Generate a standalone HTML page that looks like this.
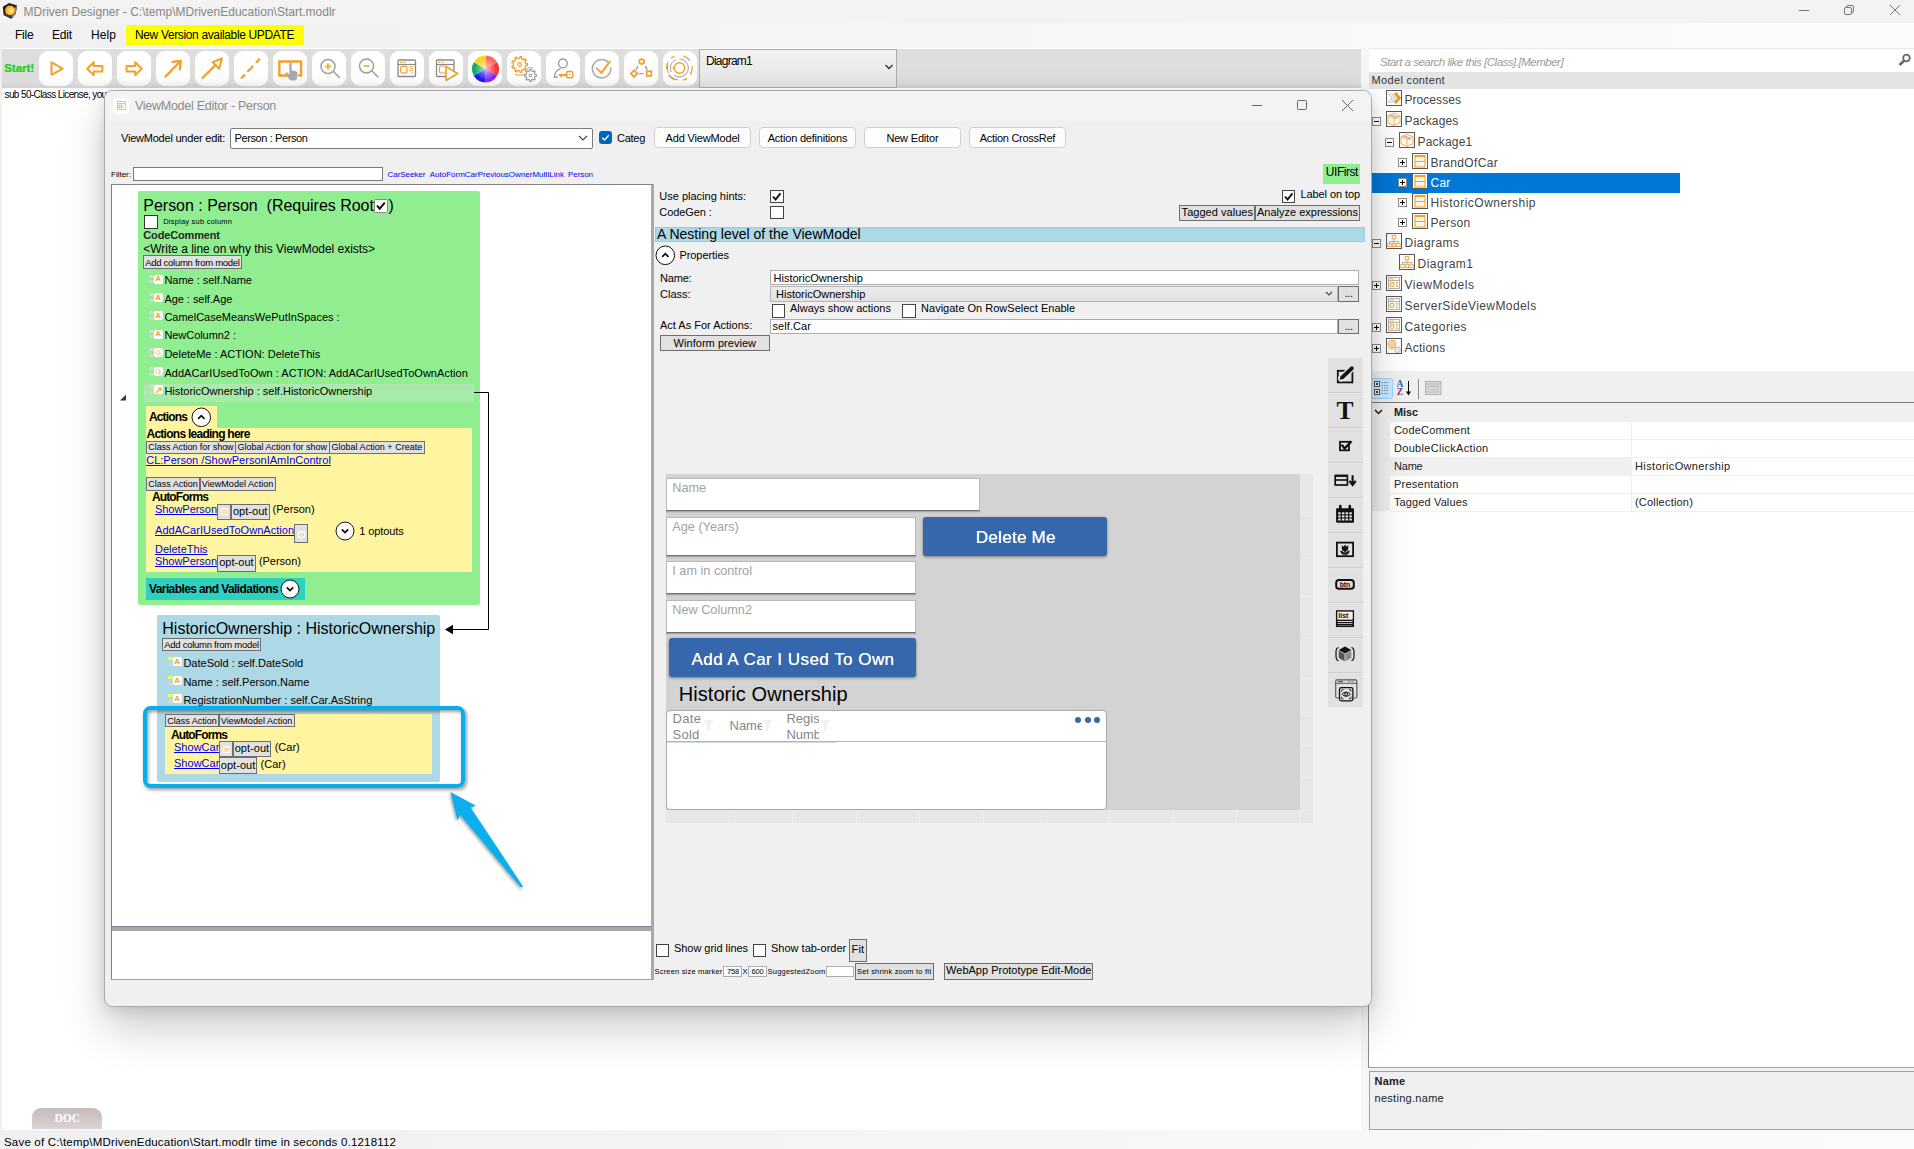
<!DOCTYPE html>
<html>
<head>
<meta charset="utf-8">
<title>MDriven Designer</title>
<style>
*{box-sizing:border-box;margin:0;padding:0}
html,body{width:1914px;height:1149px;overflow:hidden;background:#fff}
body{font-family:"Liberation Sans",sans-serif;font-size:11px;color:#000;position:relative}
.a{position:absolute}
.t{position:absolute;white-space:pre;line-height:1}
svg{position:absolute;overflow:visible}
</style>
</head>
<body>
<!-- main window chrome -->
<div class="a" style="left:0.0px;top:0.0px;width:1914.0px;height:23.0px;background:#f3f3f3;"></div>
<div class="a" style="left:0.0px;top:23.0px;width:1914.0px;height:25.0px;background:linear-gradient(to right,#f0f0f0,#fcfcfc);"></div>
<div class="a" style="left:0.0px;top:48.0px;width:2.0px;height:1101.0px;background:#f0f0f0;"></div>
<svg style="left:0.0px;top:0.0px" width="20" height="20"><defs><radialGradient id="sph" cx=".6" cy=".55" r=".7"><stop offset="0" stop-color="#fff3a0"/><stop offset=".45" stop-color="#ffc43a"/><stop offset="1" stop-color="#ff8a00"/></radialGradient></defs><path d="M9.100 3L17.100 5.500L15.700 13.800L11.400 18.800L3.600 15L2.800 6.700Z" fill="#1c1c1e"/><path d="M17.100 5.500L15.700 13.800L11.400 18.800L12.600 9.500Z" fill="#7d7d80"/><path d="M3.600 15L11.400 18.800L12 14.500L5 12.500Z" fill="#3a3a3c"/><circle cx="10" cy="10.300" r="4.900" fill="url(#sph)"/></svg>
<span class="t" style="left:23.5px;top:5.8px;font-size:12px;color:#868686;">MDriven Designer - C:\temp\MDrivenEducation\Start.modlr</span>
<span class="t" style="left:15.0px;top:28.6px;font-size:12px;letter-spacing:-0.21px;">File</span>
<span class="t" style="left:52.0px;top:28.6px;font-size:12px;letter-spacing:-0.17px;">Edit</span>
<span class="t" style="left:91.0px;top:28.6px;font-size:12px;letter-spacing:0.08px;">Help</span>
<div class="a" style="left:126.0px;top:25.0px;width:178.0px;height:20.0px;background:#ffff00;"></div>
<span class="t" style="left:135.0px;top:28.6px;font-size:12px;letter-spacing:-0.36px;">New Version available UPDATE</span>
<svg style="left:1799.0px;top:5.0px" width="10" height="10"><path d="M0 5.5H10" stroke="#777" stroke-width="1" fill="none"/></svg>
<svg style="left:1844.0px;top:5.0px" width="10" height="10"><rect x="0.5" y="2.5" width="7" height="7" rx="1.5" fill="none" stroke="#777"/><path d="M2.5 2.5V2a1.5 1.5 0 0 1 1.5-1.5h4a1.5 1.5 0 0 1 1.5 1.5v4a1.5 1.5 0 0 1-1.5 1.5h-.5" fill="none" stroke="#777"/></svg>
<svg style="left:1890.0px;top:5.0px" width="10" height="10"><path d="M0 0L10 10M10 0L0 10" stroke="#777" stroke-width="1" fill="none"/></svg>
<div class="a" style="left:2.0px;top:49.0px;width:1359.0px;height:39.0px;background:linear-gradient(#dedede,#dcdcdc 85%,#d2d2d2);"></div>
<div class="a" style="left:1361.0px;top:48.0px;width:8.0px;height:1082.0px;background:#f6f6f6;"></div>
<span class="t" style="left:4.0px;top:63.4px;font-size:11.5px;color:#2fd02f;font-weight:bold;text-shadow:0.4px 0 0 #2fd02f;">Start!</span>
<div class="a" style="left:39.0px;top:51.2px;width:34.0px;height:34.5px;background:linear-gradient(#fff 80%,#f4f4f4);border-radius:9px;"></div>
<svg style="left:39.0px;top:52.0px" width="34" height="34"><path d="M12.5 10.4V22.8L23.6 16.6Z" fill="none" stroke="#f5a028" stroke-width="2" stroke-linecap="round" stroke-linejoin="round" /></svg>
<div class="a" style="left:78.0px;top:51.2px;width:34.0px;height:34.5px;background:linear-gradient(#fff 80%,#f4f4f4);border-radius:9px;"></div>
<svg style="left:78.0px;top:52.0px" width="34" height="34"><path d="M9.2 16.7L15.8 10.3V14.1H24.4V19.4H15.8V23.1Z" fill="none" stroke="#f5a028" stroke-width="2" stroke-linecap="round" stroke-linejoin="round" /></svg>
<div class="a" style="left:117.0px;top:51.2px;width:34.0px;height:34.5px;background:linear-gradient(#fff 80%,#f4f4f4);border-radius:9px;"></div>
<svg style="left:117.0px;top:52.0px" width="34" height="34"><path d="M24.8 16.7L18.2 10.3V14.1H9.6V19.4H18.2V23.1Z" fill="none" stroke="#f5a028" stroke-width="2" stroke-linecap="round" stroke-linejoin="round" /></svg>
<div class="a" style="left:156.0px;top:51.2px;width:34.0px;height:34.5px;background:linear-gradient(#fff 80%,#f4f4f4);border-radius:9px;"></div>
<svg style="left:156.0px;top:52.0px" width="34" height="34"><path d="M9.5 24.5L24.8 8.8M16.3 9.8L24.8 8.8L23.8 17.3" fill="none" stroke="#f5a028" stroke-width="2.3" stroke-linecap="round" stroke-linejoin="round" /></svg>
<div class="a" style="left:195.0px;top:51.2px;width:34.0px;height:34.5px;background:linear-gradient(#fff 80%,#f4f4f4);border-radius:9px;"></div>
<svg style="left:195.0px;top:52.0px" width="34" height="34"><path d="M7.5 26L20.3 13.4" fill="none" stroke="#f5a028" stroke-width="2.3" stroke-linecap="round" stroke-linejoin="round" /><path d="M26.8 6.5L17.6 10.2L24.2 16.800Z" fill="none" stroke="#f5a028" stroke-width="2.1" stroke-linecap="round" stroke-linejoin="round" /></svg>
<div class="a" style="left:234.0px;top:51.2px;width:34.0px;height:34.5px;background:linear-gradient(#fff 80%,#f4f4f4);border-radius:9px;"></div>
<svg style="left:234.0px;top:52.0px" width="34" height="34"><path d="M7.800 25.800L25.400 7.300" fill="none" stroke="#f5a028" stroke-width="2.3" stroke-linecap="round" stroke-linejoin="round" stroke-dasharray="3.4 5.6 6.6 6 3.9"/></svg>
<div class="a" style="left:273.0px;top:51.2px;width:34.0px;height:34.5px;background:linear-gradient(#fff 80%,#f4f4f4);border-radius:9px;"></div>
<svg style="left:273.0px;top:52.0px" width="34" height="34"><path d="M19 23.500H6.300V9.500H28.100V23.500H26" fill="none" stroke="#f5a028" stroke-width="2.4" stroke-linecap="round" stroke-linejoin="round" stroke-linecap="butt"/><path transform="translate(-2.600 -2.400) scale(1.150)" d="M16.5 12.5c0-1.6 2-1.6 2 0v5.5l3.5.8c1.3.3 1.7 1 1.6 2.2l-.5 4.2c-.1.9-.7 1.6-1.7 1.6h-3.2c-1 0-1.5-.5-2-1.200l-2.800-4.500c-.6-1 .5-1.800 1.300-1l1.800 1.800z" fill="#aaa"/></svg>
<div class="a" style="left:312.0px;top:51.2px;width:34.0px;height:34.5px;background:linear-gradient(#fff 80%,#f4f4f4);border-radius:9px;"></div>
<svg style="left:312.0px;top:52.0px" width="34" height="34"><path d="M21.5 19.5L27.5 25.5" fill="none" stroke="#9e9e9e" stroke-width="1.5" stroke-linecap="round" stroke-linejoin="round" /><circle cx="16" cy="14.500" r="7" fill="none" stroke="#9e9e9e" stroke-width="1.5"/><path d="M13.5 14.500H18.500M16 12V17" fill="none" stroke="#f5a028" stroke-width="1.6" stroke-linecap="round" stroke-linejoin="round" /></svg>
<div class="a" style="left:351.0px;top:51.2px;width:34.0px;height:34.5px;background:linear-gradient(#fff 80%,#f4f4f4);border-radius:9px;"></div>
<svg style="left:351.0px;top:52.0px" width="34" height="34"><path d="M21 19L27 25" fill="none" stroke="#9e9e9e" stroke-width="1.5" stroke-linecap="round" stroke-linejoin="round" /><circle cx="15.500" cy="14" r="7" fill="none" stroke="#9e9e9e" stroke-width="1.5"/><path d="M13 14H18" fill="none" stroke="#f5a028" stroke-width="1.6" stroke-linecap="round" stroke-linejoin="round" /></svg>
<div class="a" style="left:390.0px;top:51.2px;width:34.0px;height:34.5px;background:linear-gradient(#fff 80%,#f4f4f4);border-radius:9px;"></div>
<svg style="left:390.0px;top:52.0px" width="34" height="34"><rect x="8" y="8" width="17.5" height="16.5" rx="1" fill="none" stroke="#8a8a8a" stroke-width="1.3"/><path d="M8 12.5H25.5" stroke="#8a8a8a" stroke-width="1.2"/><path d="M10 10.3H16" stroke="#f5a028" stroke-width="1.2" stroke-dasharray="1.5 1"/><rect x="10.700" y="14.300" width="6.300" height="6.800" rx="1.5" fill="none" stroke="#f5a028" stroke-width="1.2"/><path d="M19.500 14.500H23M19.500 16.500H23M19.500 18.500H23M21 21H23" stroke="#f5a028" stroke-width="1" opacity=".8"/></svg>
<div class="a" style="left:429.0px;top:51.2px;width:34.0px;height:34.5px;background:linear-gradient(#fff 80%,#f4f4f4);border-radius:9px;"></div>
<svg style="left:429.0px;top:52.0px" width="34" height="34"><rect x="7.5" y="8" width="17.5" height="16.5" rx="1" fill="none" stroke="#8a8a8a" stroke-width="1.3"/><path d="M7.5 12.5H25.0" stroke="#8a8a8a" stroke-width="1.2"/><path d="M9.5 10.3H15.5" stroke="#f5a028" stroke-width="1.2" stroke-dasharray="1.5 1"/><rect x="10.500" y="14" width="7" height="7" rx="1.5" fill="none" stroke="#f5a028" stroke-width="1.2"/><path d="M17 14.500V28.500L28.500 21.500Z" fill="#fff" stroke="#f5a028" stroke-width="1.6" stroke-linecap="round" stroke-linejoin="round" /></svg>
<div class="a" style="left:468.0px;top:51.2px;width:34.0px;height:34.5px;background:linear-gradient(#fff 80%,#f4f4f4);border-radius:9px;"></div>
<svg style="left:468.0px;top:52.0px" width="34" height="34"><path d="M17.5 17L17.50 3.50A13.5 13.5 0 0 1 29.19 10.25Z" fill="#ff6b60"/><path d="M17.5 17L29.19 10.25A13.5 13.5 0 0 1 29.19 23.75Z" fill="#ff3535"/><path d="M17.5 17L29.19 23.75A13.5 13.5 0 0 1 17.50 30.50Z" fill="#8a2cf0"/><path d="M17.5 17L17.50 30.50A13.5 13.5 0 0 1 5.81 23.75Z" fill="#1c1cf5"/><path d="M17.5 17L5.81 23.75A13.5 13.5 0 0 1 5.81 10.25Z" fill="#12ad6c"/><path d="M17.5 17L5.81 10.25A13.5 13.5 0 0 1 17.50 3.50Z" fill="#ffd21e"/><circle cx="17.5" cy="17" r="9.5" fill="#fff" opacity="0.18"/><circle cx="17.5" cy="17" r="6.5" fill="#fff" opacity="0.2"/><circle cx="17.5" cy="17" r="3.5" fill="#fff" opacity="0.25"/></svg>
<div class="a" style="left:507.0px;top:51.2px;width:34.0px;height:34.5px;background:linear-gradient(#fff 80%,#f4f4f4);border-radius:9px;"></div>
<svg style="left:507.0px;top:52.0px" width="34" height="34"><path d="M20.54 11.54 L20.54 13.46 L18.72 13.47 L17.91 15.69 L19.30 16.87 L18.07 18.34 L16.67 17.18 L14.62 18.36 L14.92 20.16 L13.04 20.49 L12.71 18.70 L10.38 18.29 L9.46 19.86 L7.80 18.90 L8.70 17.32 L7.18 15.51 L5.46 16.12 L4.81 14.32 L6.51 13.68 L6.51 11.32 L4.81 10.68 L5.46 8.88 L7.18 9.49 L8.70 7.68 L7.80 6.10 L9.46 5.14 L10.38 6.71 L12.71 6.30 L13.04 4.51 L14.92 4.84 L14.62 6.64 L16.67 7.82 L18.07 6.66 L19.30 8.13 L17.91 9.31 L18.72 11.53Z" fill="none" stroke="#f5a028" stroke-width="1.3" stroke-linejoin="round"/><circle cx="12.600" cy="12.500" r="1.800" fill="none" stroke="#f5a028" stroke-width="1.2"/><path d="M8.500 22.500C11 23.600 14 23.600 16.500 22.500" fill="none" stroke="#f5a028" stroke-width="1" stroke-linecap="round" stroke-linejoin="round" /><path d="M29.46 22.68 L29.46 24.12 L28.01 24.32 L27.34 25.94 L28.22 27.10 L27.20 28.12 L26.04 27.24 L24.42 27.91 L24.22 29.36 L22.78 29.36 L22.58 27.91 L20.96 27.24 L19.80 28.12 L18.78 27.10 L19.66 25.94 L18.99 24.32 L17.54 24.12 L17.54 22.68 L18.99 22.48 L19.66 20.86 L18.78 19.70 L19.80 18.68 L20.96 19.56 L22.58 18.89 L22.78 17.44 L24.22 17.44 L24.42 18.89 L26.04 19.56 L27.20 18.68 L28.22 19.70 L27.34 20.86 L28.01 22.48Z" fill="none" stroke="#9e9e9e" stroke-width="1.2" stroke-linejoin="round"/><circle cx="23.500" cy="23.400" r="1.400" fill="none" stroke="#9e9e9e" stroke-width="1.1"/><path d="M20.500 16.300C22.500 15.300 24.500 15.300 26.500 16.300" fill="none" stroke="#9e9e9e" stroke-width="1" stroke-linecap="round" stroke-linejoin="round" stroke-dasharray="2 1.2"/></svg>
<div class="a" style="left:546.0px;top:51.2px;width:34.0px;height:34.5px;background:linear-gradient(#fff 80%,#f4f4f4);border-radius:9px;"></div>
<svg style="left:546.0px;top:52.0px" width="34" height="34"><circle cx="16.900" cy="11.400" r="4.400" fill="none" stroke="#9e9e9e" stroke-width="1.4"/><path d="M14.200 16.600C10.500 18 8.600 21.500 8.300 25.300H11.200" fill="none" stroke="#9e9e9e" stroke-width="1.4" stroke-linecap="round" stroke-linejoin="round" /><path d="M13.500 23H20.500" fill="none" stroke="#f5a028" stroke-width="2.2" stroke-linecap="round" stroke-linejoin="round" /><rect x="20.500" y="19.600" width="6.200" height="6.200" rx="1.600" fill="none" stroke="#f5a028" stroke-width="1.5"/><circle cx="23.700" cy="22.600" r=".8" fill="#f5a028"/><path d="M15.200 23V25" fill="none" stroke="#f5a028" stroke-width="1.5" stroke-linecap="round" stroke-linejoin="round" /></svg>
<div class="a" style="left:585.0px;top:51.2px;width:34.0px;height:34.5px;background:linear-gradient(#fff 80%,#f4f4f4);border-radius:9px;"></div>
<svg style="left:585.0px;top:52.0px" width="34" height="34"><path d="M22.500 9.650A9.200 9.200 0 1 0 25.760 15.900" fill="none" stroke="#a8a8a8" stroke-width="1.5" stroke-linecap="round"/><path d="M11.700 16.400L16.400 20.900L24.800 9.600" fill="none" stroke="#f5a028" stroke-width="2" stroke-linecap="round" stroke-linejoin="round" /></svg>
<div class="a" style="left:624.0px;top:51.2px;width:34.0px;height:34.5px;background:linear-gradient(#fff 80%,#f4f4f4);border-radius:9px;"></div>
<svg style="left:624.0px;top:52.0px" width="34" height="34"><circle cx="17.700" cy="9.600" r="2.400" fill="none" stroke="#f5a028" stroke-width="1.800"/><rect x="7.800" y="19.300" width="4.600" height="4.600" transform="rotate(45 10.100 21.600)" fill="none" stroke="#f5a028" stroke-width="1.800"/><rect x="22.700" y="19.300" width="4.600" height="4.600" fill="none" stroke="#f5a028" stroke-width="1.800"/><path d="M13.700 14.600L12.200 17.400M21.600 14.600L23.100 17.400M15.500 21.600H19" fill="none" stroke="#9e9e9e" stroke-width="1.4" stroke-linecap="round" stroke-linejoin="round" /></svg>
<div class="a" style="left:663.0px;top:51.2px;width:34.0px;height:34.5px;background:linear-gradient(#fff 80%,#f4f4f4);border-radius:9px;"></div>
<svg style="left:663.0px;top:52.0px" width="34" height="34"><circle cx="16.400" cy="16" r="5.300" fill="none" stroke="#f5a028" stroke-width="1.4"/><circle cx="16.400" cy="16" r="9" fill="none" stroke="#9e9e9e" stroke-width="1" stroke-dasharray="20 4 14 5"/><circle cx="16.400" cy="16" r="12.800" fill="none" stroke="#f5a028" stroke-width="1.300" stroke-dasharray="7 5 4 9 8 6"/><path d="M4.900 12.500A12.000 12.000 0 0 0 15.400 28" fill="none" stroke="#9e9e9e" stroke-width="1" stroke-dasharray="9 3"/><path d="M9.300 16H10.800" fill="none" stroke="#f5a028" stroke-width="1.2" stroke-linecap="round" stroke-linejoin="round" /></svg>
<div class="a" style="left:699.0px;top:49.0px;width:198.0px;height:38.5px;background:linear-gradient(#f2f2f2,#e4e4e4);border:1px solid #adadad;"></div>
<span class="t" style="left:706.0px;top:54.6px;font-size:12px;letter-spacing:-0.75px;">Diagram1</span>
<svg style="left:885.0px;top:64.0px" width="8" height="6"><path d="M0.5 1L4 4.5L7.5 1" fill="none" stroke="#333" stroke-width="1.4"/></svg>
<span class="t" style="left:4.5px;top:90.1px;font-size:10px;letter-spacing:-0.61px;">sub 50-Class License, you</span>
<!-- right panel -->
<div class="a" style="left:1369.0px;top:48.0px;width:545.0px;height:1082.0px;background:#fff;"></div>
<div class="a" style="left:1369.0px;top:47.5px;width:545.0px;height:1.0px;background:#e9e9e9;"></div>
<span class="t" style="left:1380.0px;top:57.2px;font-size:11.5px;color:#9b9b9b;font-style:italic;letter-spacing:-0.49px;">Start a search like this [Class].[Member]</span>
<svg style="left:1897.0px;top:53.0px" width="15" height="14"><circle cx="9.500" cy="5" r="3.300" fill="none" stroke="#666" stroke-width="1.800"/><path d="M7 7.800L2.500 12" stroke="#666" stroke-width="2.600" stroke-linecap="butt"/></svg>
<div class="a" style="left:1369.0px;top:72.0px;width:545.0px;height:16.5px;background:#e4e4e4;"></div>
<span class="t" style="left:1371.5px;top:74.8px;font-size:11px;color:#333;letter-spacing:0.34px;">Model content</span>
<div class="a" style="left:1371.0px;top:173.0px;width:309.0px;height:19.5px;background:#0078d7;"></div>
<svg style="left:1386.0px;top:90.0px" width="16" height="16"><rect x=".5" y=".5" width="15" height="15" fill="#fff" stroke="#5a5a5a"/><path d="M2.300 3.200L6.200 8L2.300 12.800M5.300 3.200L9.200 8L5.300 12.800" fill="none" stroke="#c4c4c4" stroke-width="1.100"/><path d="M9 3L13.200 8L9 13" fill="none" stroke="#f39a1e" stroke-width="3"/></svg>
<span class="t" style="left:1404.5px;top:94.0px;font-size:12px;color:#444;letter-spacing:0.05px;">Processes</span>
<svg style="left:1372.0px;top:116.5px" width="9" height="9"><rect x=".5" y=".5" width="8" height="8" fill="#fff" stroke="#8c8c8c"/><path d="M2 4.5H7" stroke="#000" stroke-width="1"/></svg>
<svg style="left:1386.0px;top:111.0px" width="16" height="16"><rect x=".5" y=".5" width="15" height="15" fill="#fff" stroke="#5a5a5a"/><path d="M2 4.800L8 2.200L14 4.800V11.800L8 14.400L2 11.800Z" fill="#fffaf2" stroke="#f7b558" stroke-width="1" stroke-linejoin="round"/><path d="M2 4.800L8 7.400L14 4.800M8 7.400V14.400" fill="none" stroke="#f7b558" stroke-width="1"/><path d="M4.500 3.800L10.500 6.300V8" fill="none" stroke="#b0b0b0" stroke-width="1.300"/></svg>
<span class="t" style="left:1404.5px;top:115.0px;font-size:12px;color:#444;letter-spacing:0.16px;">Packages</span>
<svg style="left:1385.0px;top:137.5px" width="9" height="9"><rect x=".5" y=".5" width="8" height="8" fill="#fff" stroke="#8c8c8c"/><path d="M2 4.5H7" stroke="#000" stroke-width="1"/></svg>
<svg style="left:1399.0px;top:132.0px" width="16" height="16"><rect x=".5" y=".5" width="15" height="15" fill="#fff" stroke="#5a5a5a"/><path d="M2 4.800L8 2.200L14 4.800V11.800L8 14.400L2 11.800Z" fill="#fffaf2" stroke="#f7b558" stroke-width="1" stroke-linejoin="round"/><path d="M2 4.800L8 7.400L14 4.800M8 7.400V14.400" fill="none" stroke="#f7b558" stroke-width="1"/><path d="M4.500 3.800L10.500 6.300V8" fill="none" stroke="#b0b0b0" stroke-width="1.300"/></svg>
<span class="t" style="left:1417.5px;top:136.0px;font-size:12px;color:#444;letter-spacing:0.20px;">Package1</span>
<svg style="left:1398.0px;top:157.5px" width="9" height="9"><rect x=".5" y=".5" width="8" height="8" fill="#fff" stroke="#8c8c8c"/><path d="M2 4.5H7" stroke="#000" stroke-width="1"/><path d="M4.5 2V7" stroke="#000" stroke-width="1"/></svg>
<svg style="left:1412.0px;top:153.0px" width="16" height="16"><rect x=".5" y=".5" width="15" height="15" fill="#fff" stroke="#5a5a5a"/><rect x="3" y="2.500" width="10" height="11.500" fill="#fff7ec" stroke="#f5a028" stroke-width="1.1"/><path d="M3 3H13" stroke="#f5a028" stroke-width="2"/><path d="M3 8.500H13" stroke="#f5a028" stroke-width="1.1"/></svg>
<span class="t" style="left:1430.5px;top:157.0px;font-size:12px;color:#444;letter-spacing:0.35px;">BrandOfCar</span>
<svg style="left:1398.0px;top:177.5px" width="9" height="9"><rect x=".5" y=".5" width="8" height="8" fill="#fff" stroke="#8c8c8c"/><path d="M2 4.5H7" stroke="#000" stroke-width="1"/><path d="M4.5 2V7" stroke="#000" stroke-width="1"/></svg>
<svg style="left:1412.0px;top:173.0px" width="16" height="16"><rect x=".5" y=".5" width="15" height="15" fill="#fff" stroke="#5a5a5a"/><rect x="3" y="2.500" width="10" height="11.500" fill="#fff7ec" stroke="#f5a028" stroke-width="1.1"/><path d="M3 3H13" stroke="#f5a028" stroke-width="2"/><path d="M3 8.500H13" stroke="#f5a028" stroke-width="1.1"/></svg>
<span class="t" style="left:1430.5px;top:177.0px;font-size:12px;color:#fff;letter-spacing:0.22px;">Car</span>
<svg style="left:1398.0px;top:197.5px" width="9" height="9"><rect x=".5" y=".5" width="8" height="8" fill="#fff" stroke="#8c8c8c"/><path d="M2 4.5H7" stroke="#000" stroke-width="1"/><path d="M4.5 2V7" stroke="#000" stroke-width="1"/></svg>
<svg style="left:1412.0px;top:193.0px" width="16" height="16"><rect x=".5" y=".5" width="15" height="15" fill="#fff" stroke="#5a5a5a"/><rect x="3" y="2.500" width="10" height="11.500" fill="#fff7ec" stroke="#f5a028" stroke-width="1.1"/><path d="M3 3H13" stroke="#f5a028" stroke-width="2"/><path d="M3 8.500H13" stroke="#f5a028" stroke-width="1.1"/></svg>
<span class="t" style="left:1430.5px;top:197.0px;font-size:12px;color:#444;letter-spacing:0.48px;">HistoricOwnership</span>
<svg style="left:1398.0px;top:217.5px" width="9" height="9"><rect x=".5" y=".5" width="8" height="8" fill="#fff" stroke="#8c8c8c"/><path d="M2 4.5H7" stroke="#000" stroke-width="1"/><path d="M4.5 2V7" stroke="#000" stroke-width="1"/></svg>
<svg style="left:1412.0px;top:213.0px" width="16" height="16"><rect x=".5" y=".5" width="15" height="15" fill="#fff" stroke="#5a5a5a"/><rect x="3" y="2.500" width="10" height="11.500" fill="#fff7ec" stroke="#f5a028" stroke-width="1.1"/><path d="M3 3H13" stroke="#f5a028" stroke-width="2"/><path d="M3 8.500H13" stroke="#f5a028" stroke-width="1.1"/></svg>
<span class="t" style="left:1430.5px;top:217.0px;font-size:12px;color:#444;letter-spacing:0.33px;">Person</span>
<svg style="left:1372.0px;top:238.5px" width="9" height="9"><rect x=".5" y=".5" width="8" height="8" fill="#fff" stroke="#8c8c8c"/><path d="M2 4.5H7" stroke="#000" stroke-width="1"/></svg>
<svg style="left:1386.0px;top:233.0px" width="16" height="16"><rect x=".5" y=".5" width="15" height="15" fill="#fff" stroke="#5a5a5a"/><rect x="6.200" y="2.500" width="3.600" height="3.300" fill="none" stroke="#f7a840" stroke-width=".9"/><path d="M8 6V8.500M3.500 10.500V8.500H12.500V10.500M8 8.500V10.500" fill="none" stroke="#b0b0b0" stroke-width="1"/><rect x="1.800" y="10.600" width="3.400" height="3" fill="none" stroke="#f7a840" stroke-width=".9"/><rect x="6.300" y="10.600" width="3.400" height="3" fill="none" stroke="#f7a840" stroke-width=".9"/><rect x="10.800" y="10.600" width="3.400" height="3" fill="none" stroke="#f7a840" stroke-width=".9"/></svg>
<span class="t" style="left:1404.5px;top:237.0px;font-size:12px;color:#444;letter-spacing:0.46px;">Diagrams</span>
<svg style="left:1399.0px;top:254.0px" width="16" height="16"><rect x=".5" y=".5" width="15" height="15" fill="#fff" stroke="#5a5a5a"/><rect x="6.200" y="2.500" width="3.600" height="3.300" fill="none" stroke="#f7a840" stroke-width=".9"/><path d="M8 6V8.500M3.500 10.500V8.500H12.500V10.500M8 8.500V10.500" fill="none" stroke="#b0b0b0" stroke-width="1"/><rect x="1.800" y="10.600" width="3.400" height="3" fill="none" stroke="#f7a840" stroke-width=".9"/><rect x="6.300" y="10.600" width="3.400" height="3" fill="none" stroke="#f7a840" stroke-width=".9"/><rect x="10.800" y="10.600" width="3.400" height="3" fill="none" stroke="#f7a840" stroke-width=".9"/></svg>
<span class="t" style="left:1417.5px;top:258.0px;font-size:12px;color:#444;letter-spacing:0.50px;">Diagram1</span>
<svg style="left:1372.0px;top:280.5px" width="9" height="9"><rect x=".5" y=".5" width="8" height="8" fill="#fff" stroke="#8c8c8c"/><path d="M2 4.5H7" stroke="#000" stroke-width="1"/><path d="M4.5 2V7" stroke="#000" stroke-width="1"/></svg>
<svg style="left:1386.0px;top:275.0px" width="16" height="16"><rect x=".5" y=".5" width="15" height="15" fill="#fff" stroke="#5a5a5a"/><rect x="2.500" y="2.500" width="11" height="11" fill="none" stroke="#b5b5b5" stroke-width="1"/><path d="M2.500 5.500H13.500" stroke="#b5b5b5"/><path d="M3.500 4H8" stroke="#f5a028" stroke-width="1" opacity=".7"/><rect x="4.200" y="7.500" width="3.600" height="3.800" rx=".8" fill="none" stroke="#f5a028" stroke-width="1"/><path d="M10 7.500H12M11 7.500V11.500M10 11.500H12" stroke="#f5a028" stroke-width=".9" opacity=".8" fill="none"/></svg>
<span class="t" style="left:1404.5px;top:279.0px;font-size:12px;color:#444;letter-spacing:0.55px;">ViewModels</span>
<svg style="left:1386.0px;top:296.0px" width="16" height="16"><rect x=".5" y=".5" width="15" height="15" fill="#fff" stroke="#5a5a5a"/><rect x="2.500" y="2.500" width="11" height="11" fill="none" stroke="#b5b5b5" stroke-width="1"/><path d="M2.500 5.500H13.500" stroke="#b5b5b5"/><path d="M3.500 4H8" stroke="#f5a028" stroke-width="1" opacity=".7"/><rect x="4.200" y="7.500" width="3.600" height="3.800" rx=".8" fill="none" stroke="#f5a028" stroke-width="1"/><path d="M10 7.500H12M11 7.500V11.500M10 11.500H12" stroke="#f5a028" stroke-width=".9" opacity=".8" fill="none"/></svg>
<span class="t" style="left:1404.5px;top:300.0px;font-size:12px;color:#444;letter-spacing:0.41px;">ServerSideViewModels</span>
<svg style="left:1372.0px;top:322.5px" width="9" height="9"><rect x=".5" y=".5" width="8" height="8" fill="#fff" stroke="#8c8c8c"/><path d="M2 4.5H7" stroke="#000" stroke-width="1"/><path d="M4.5 2V7" stroke="#000" stroke-width="1"/></svg>
<svg style="left:1386.0px;top:317.0px" width="16" height="16"><rect x=".5" y=".5" width="15" height="15" fill="#fff" stroke="#5a5a5a"/><rect x="2.500" y="2.500" width="11" height="11" fill="none" stroke="#b5b5b5" stroke-width="1"/><path d="M2.500 5.500H13.500" stroke="#b5b5b5"/><path d="M3.500 4H8" stroke="#f5a028" stroke-width="1" opacity=".7"/><rect x="4.200" y="7.500" width="3.600" height="3.800" rx=".8" fill="none" stroke="#f5a028" stroke-width="1"/><path d="M10 7.500H12M11 7.500V11.500M10 11.500H12" stroke="#f5a028" stroke-width=".9" opacity=".8" fill="none"/></svg>
<span class="t" style="left:1404.5px;top:321.0px;font-size:12px;color:#444;letter-spacing:0.45px;">Categories</span>
<svg style="left:1372.0px;top:343.5px" width="9" height="9"><rect x=".5" y=".5" width="8" height="8" fill="#fff" stroke="#8c8c8c"/><path d="M2 4.5H7" stroke="#000" stroke-width="1"/><path d="M4.5 2V7" stroke="#000" stroke-width="1"/></svg>
<svg style="left:1386.0px;top:338.0px" width="16" height="16"><rect x=".5" y=".5" width="15" height="15" fill="#fff" stroke="#5a5a5a"/><circle cx="6" cy="6" r="3.400" fill="none" stroke="#f7a840" stroke-width="1.300"/><circle cx="6" cy="6" r="1.100" fill="none" stroke="#f7a840" stroke-width=".9"/><path d="M3.500 10.500C5 11.300 7 11.300 8.500 10.500" fill="none" stroke="#f7a840" stroke-width=".8"/><circle cx="11.500" cy="11.800" r="2.700" fill="none" stroke="#c8c8c8" stroke-width="1.200"/><circle cx="11.500" cy="11.800" r=".8" fill="#c8c8c8"/></svg>
<span class="t" style="left:1404.5px;top:342.0px;font-size:12px;color:#444;letter-spacing:0.23px;">Actions</span>
<div class="a" style="left:1369.0px;top:371.0px;width:545.0px;height:31.0px;background:#f0f0f0;"></div>
<div class="a" style="left:1371.3px;top:378.0px;width:21.7px;height:20.5px;background:#cce8ff;border:1px solid #99d1ff;border-radius:2.5px;"></div>
<svg style="left:1374.0px;top:380.0px" width="16" height="16"><rect x=".5" y="1.500" width="5" height="5" fill="#fff" stroke="#555"/><path d="M1.800 4H4.200M3 2.800V5.200" stroke="#000" stroke-width="1"/><rect x=".5" y="9.500" width="5" height="5" fill="#fff" stroke="#555"/><path d="M1.800 12H4.200M3 10.800V13.200" stroke="#000" stroke-width="1"/><path d="M7.500 2.500H14M7.500 5.500H14M7.500 8H14M7.500 10.500H14M7.500 13.500H14" stroke="#6a8fb0" stroke-width="1" stroke-dasharray="1.500 1"/></svg>
<span class="t" style="left:1396.5px;top:380.3px;font-size:9.5px;color:#2a62c9;font-weight:bold;font-family:'Liberation Serif',serif;">A</span>
<span class="t" style="left:1396.8px;top:388.3px;font-size:9.5px;color:#8a3a6a;font-weight:bold;font-family:'Liberation Serif',serif;">Z</span>
<svg style="left:1405.0px;top:380.0px" width="8" height="16"><path d="M3.500 1V14" stroke="#000" stroke-width="1"/><path d="M1 11.500L3.500 15.500L6 11.500Z" fill="#000"/></svg>
<div class="a" style="left:1418.0px;top:379.0px;width:1.0px;height:20.0px;background:#8a8a8a;"></div>
<svg style="left:1425.0px;top:380.0px" width="17" height="16"><rect x=".5" y="1.500" width="15.500" height="13" fill="#dcdcdc" stroke="#b0b0b0"/><path d="M.5 4H16" stroke="#b0b0b0"/><rect x="3" y="6.500" width="10" height="5.500" fill="none" stroke="#b8b8b8"/><path d="M5 9.500H11" stroke="#bbb"/></svg>
<div class="a" style="left:1369.0px;top:402.0px;width:545.0px;height:1.0px;background:#7a7a7a;"></div>
<div class="a" style="left:1372.0px;top:403.0px;width:542.0px;height:18.5px;background:#f0f0f0;"></div>
<div class="a" style="left:1372.0px;top:421.0px;width:18.0px;height:90.0px;background:#f0f0f0;"></div>
<svg style="left:1373.5px;top:408.7px" width="9" height="6"><path d="M1 1L4.500 4.500L8 1" fill="none" stroke="#222" stroke-width="1.500"/></svg>
<span class="t" style="left:1394.0px;top:406.6px;font-size:11px;color:#222;font-weight:bold;letter-spacing:-0.12px;">Misc</span>
<div class="a" style="left:1390.0px;top:438.5px;width:524.0px;height:1.0px;background:#f0f0f0;"></div>
<span class="t" style="left:1394.0px;top:424.6px;font-size:11px;color:#222;letter-spacing:0.18px;">CodeComment</span>
<div class="a" style="left:1390.0px;top:456.5px;width:524.0px;height:1.0px;background:#f0f0f0;"></div>
<span class="t" style="left:1394.0px;top:442.6px;font-size:11px;color:#222;letter-spacing:0.31px;">DoubleClickAction</span>
<div class="a" style="left:1390.0px;top:457.0px;width:241.0px;height:18.0px;background:#f0f0f0;"></div>
<div class="a" style="left:1390.0px;top:474.5px;width:524.0px;height:1.0px;background:#f0f0f0;"></div>
<span class="t" style="left:1394.0px;top:460.6px;font-size:11px;color:#222;letter-spacing:-0.21px;">Name</span>
<span class="t" style="left:1635.0px;top:460.6px;font-size:11px;color:#222;letter-spacing:0.37px;">HistoricOwnership</span>
<div class="a" style="left:1390.0px;top:492.5px;width:524.0px;height:1.0px;background:#f0f0f0;"></div>
<span class="t" style="left:1394.0px;top:478.6px;font-size:11px;color:#222;letter-spacing:0.23px;">Presentation</span>
<div class="a" style="left:1390.0px;top:510.5px;width:524.0px;height:1.0px;background:#f0f0f0;"></div>
<span class="t" style="left:1394.0px;top:496.6px;font-size:11px;color:#222;letter-spacing:0.12px;">Tagged Values</span>
<span class="t" style="left:1635.0px;top:496.6px;font-size:11px;color:#222;letter-spacing:0.20px;">(Collection)</span>
<div class="a" style="left:1631.0px;top:421.0px;width:1.0px;height:90.0px;background:#f0f0f0;"></div>
<div class="a" style="left:1369.0px;top:1067.0px;width:545.0px;height:4.0px;background:#f0f0f0;"></div>
<div class="a" style="left:1369.0px;top:1067.0px;width:545.0px;height:1.0px;background:#a0a0a0;"></div>
<div class="a" style="left:1368.0px;top:92.0px;width:1.0px;height:976.0px;background:#8e8e8e;"></div>
<div class="a" style="left:1369.0px;top:1071.0px;width:546.0px;height:58.5px;background:#f0f0f0;border:1px solid #a0a0a0;"></div>
<span class="t" style="left:1374.5px;top:1075.6px;font-size:11px;color:#222;font-weight:bold;letter-spacing:0.26px;">Name</span>
<span class="t" style="left:1374.5px;top:1093.1px;font-size:11px;color:#222;letter-spacing:0.29px;">nesting.name</span>
<div class="a" style="left:0.0px;top:1129.5px;width:1914.0px;height:19.5px;background:linear-gradient(to right,#f0f0f0,#fbfbfb);"></div>
<span class="t" style="left:4.0px;top:1136.6px;font-size:11.5px;letter-spacing:0.19px;">Save of C:\temp\MDrivenEducation\Start.modlr time in seconds 0.1218112</span>
<div class="a" style="left:32.0px;top:1108.0px;width:70.0px;height:21.0px;background:linear-gradient(#c6baba,#dcd3d3);border-radius:9px 9px 0 0;"></div>
<span class="t" style="left:54.5px;top:1113.2px;font-size:11.5px;color:#fff;font-weight:bold;font-family:'Liberation Serif',serif;">DOC</span>
<!-- ViewModel editor window -->
<div class="a" style="left:104.0px;top:90.0px;width:1268.0px;height:916.5px;background:#f0f0f0;border:1px solid #a9a9a9;border-radius:8.5px;box-shadow:0 22px 44px rgba(0,0,0,.2),0 3px 14px rgba(0,0,0,.12);overflow:hidden;"><div class="a" style="left:0;top:0;width:1266px;height:30px;background:#f3f3f3"></div></div>
<div class="a" style="left:113.0px;top:98.0px;width:16.0px;height:16.0px;background:#fff;border-radius:4px;"></div>
<svg style="left:117.0px;top:101.0px" width="9" height="9"><rect x=".5" y=".5" width="8" height="8" fill="#fff" stroke="#c9c9c9"/><path d="M.5 2.500H8.500" stroke="#c9c9c9"/><rect x="2" y="4" width="2.500" height="2.800" fill="none" stroke="#f5a028" stroke-width=".8"/><path d="M5.800 4V7" stroke="#f5a028" stroke-width=".8" opacity=".7"/></svg>
<span class="t" style="left:135.0px;top:99.9px;font-size:12.5px;color:#8a8a8a;letter-spacing:-0.27px;">ViewModel Editor - Person</span>
<svg style="left:1252.0px;top:100.0px" width="10" height="10"><path d="M0 5.500H10" stroke="#666" fill="none"/></svg>
<svg style="left:1297.0px;top:100.0px" width="10" height="10"><rect x=".5" y=".5" width="9" height="9" rx="1" fill="none" stroke="#666"/></svg>
<svg style="left:1342.0px;top:100.0px" width="11" height="11"><path d="M0 0L11 11M11 0L0 11" stroke="#666" fill="none"/></svg>
<span class="t" style="left:121.0px;top:132.9px;font-size:11px;letter-spacing:-0.22px;">ViewModel under edit:</span>
<div class="a" style="left:230.0px;top:128.0px;width:362.5px;height:20.5px;background:#fff;border:1px solid #7a7a7a;border-radius:2px;"></div>
<span class="t" style="left:234.5px;top:132.9px;font-size:11px;letter-spacing:-0.39px;">Person : Person</span>
<svg style="left:578.0px;top:135.0px" width="10" height="7"><path d="M1 1L5 5L9 1" fill="none" stroke="#444" stroke-width="1.100"/></svg>
<div class="a" style="left:599.0px;top:131.0px;width:13.0px;height:13.0px;background:#0067c0;border-radius:3px;"></div>
<svg style="left:599.0px;top:131.0px" width="13" height="13"><path d="M3.200 6.800L5.500 9L9.800 4.300" fill="none" stroke="#fff" stroke-width="1.300"/></svg>
<span class="t" style="left:617.0px;top:132.9px;font-size:11px;letter-spacing:-0.27px;">Categ</span>
<div class="a" style="left:654.4px;top:127.3px;width:96.4px;height:20.4px;background:#fdfdfd;border:1px solid #d0d0d0;border-radius:4px;"></div>
<span class="t" style="left:665.6px;top:132.9px;font-size:11px;letter-spacing:-0.17px;">Add ViewModel</span>
<div class="a" style="left:759.2px;top:127.3px;width:96.4px;height:20.4px;background:#fdfdfd;border:1px solid #d0d0d0;border-radius:4px;"></div>
<span class="t" style="left:767.7px;top:132.9px;font-size:11px;letter-spacing:-0.20px;">Action definitions</span>
<div class="a" style="left:864.2px;top:127.3px;width:96.4px;height:20.4px;background:#fdfdfd;border:1px solid #d0d0d0;border-radius:4px;"></div>
<span class="t" style="left:886.4px;top:132.9px;font-size:11px;letter-spacing:-0.18px;">New Editor</span>
<div class="a" style="left:969.2px;top:127.3px;width:96.4px;height:20.4px;background:#fdfdfd;border:1px solid #d0d0d0;border-radius:4px;"></div>
<span class="t" style="left:979.7px;top:132.9px;font-size:11px;letter-spacing:-0.27px;">Action CrossRef</span>
<span class="t" style="left:111.0px;top:170.8px;font-size:8px;">Filter:</span>
<div class="a" style="left:133.0px;top:167.0px;width:249.5px;height:13.7px;background:#fff;border:1px solid #7a7a7a;"></div>
<span class="t" style="left:387.6px;top:170.9px;font-size:8px;color:#0000ff;letter-spacing:-0.06px;">CarSeeker</span>
<span class="t" style="left:429.7px;top:170.9px;font-size:8px;color:#0000ff;">AutoFormCarPreviousOwnerMultiLink</span>
<span class="t" style="left:568.0px;top:170.9px;font-size:8px;color:#0000ff;letter-spacing:-0.06px;">Person</span>
<div class="a" style="left:111.0px;top:184.0px;width:543.0px;height:796.0px;background:#fff;border:1px solid #828282;border-right:3px solid #a9a9a9;border-bottom:1px solid #a3a3a3;"></div>
<div class="a" style="left:112.0px;top:926.0px;width:539.0px;height:5.0px;background:#a9a9a9;"></div>
<div class="a" style="left:112.0px;top:926.0px;width:539.0px;height:1.0px;background:#7b8494;"></div>
<div class="a" style="left:138.0px;top:190.7px;width:341.8px;height:414.0px;background:#90ee90;border-radius:2px;"></div>
<span class="t" style="left:143.3px;top:197.5px;font-size:16px;letter-spacing:-0.02px;">Person : Person  (Requires Root</span>
<div class="a" style="left:374.0px;top:199.3px;width:13.5px;height:13.5px;background:#fff;border:1px solid #8a8a8a;border-radius:1.5px;"></div>
<svg style="left:374.0px;top:199.3px" width="13.5" height="13.5"><path d="M3 6.600L5.700 9.700L10.800 3.600" fill="none" stroke="#111" stroke-width="2"/></svg>
<span class="t" style="left:388.5px;top:197.5px;font-size:16px;">)</span>
<div class="a" style="left:144.0px;top:215.0px;width:13.5px;height:13.5px;background:#fff;border:1px solid #333;"></div>
<span class="t" style="left:163.2px;top:217.9px;font-size:7.5px;letter-spacing:0.22px;">Display sub column</span>
<span class="t" style="left:143.3px;top:230.0px;font-size:11px;color:#262626;font-weight:bold;letter-spacing:-0.15px;">CodeComment</span>
<span class="t" style="left:143.3px;top:243.1px;font-size:12px;letter-spacing:-0.03px;">&lt;Write a line on why this ViewModel exists&gt;</span>
<div class="a" style="left:143.0px;top:255.3px;width:99.0px;height:13.3px;background:#e1e1e1;border:1px solid #6e6e6e;"></div>
<span class="t" style="left:145.2px;top:257.5px;font-size:9.5px;letter-spacing:-0.28px;">Add column from model</span>
<div class="a" style="left:144.0px;top:383.5px;width:330.0px;height:18.0px;background:#a8eaa8;border:1px solid #b9e3b9;"></div>
<div class="a" style="left:149.0px;top:274.8px;width:4.5px;height:3.0px;background:#d8d8d8;border-radius:1.2px;"></div>
<div class="a" style="left:149.0px;top:280.3px;width:4.5px;height:3.0px;background:#d8d8d8;border-radius:1.2px;opacity:.8;"></div>
<div class="a" style="left:154.0px;top:274.8px;width:9.0px;height:9.0px;background:#fff;border-radius:2px;"></div>
<span class="t" style="left:155.3px;top:275.4px;font-size:8px;color:#f5a028;font-weight:bold;">A</span>
<span class="t" style="left:164.4px;top:275.4px;font-size:11px;letter-spacing:-0.03px;">Name : self.Name</span>
<div class="a" style="left:149.0px;top:293.0px;width:4.5px;height:3.0px;background:#d8d8d8;border-radius:1.2px;"></div>
<div class="a" style="left:149.0px;top:298.5px;width:4.5px;height:3.0px;background:#d8d8d8;border-radius:1.2px;opacity:.8;"></div>
<div class="a" style="left:154.0px;top:293.0px;width:9.0px;height:9.0px;background:#fff;border-radius:2px;"></div>
<span class="t" style="left:155.3px;top:293.6px;font-size:8px;color:#f5a028;font-weight:bold;">A</span>
<span class="t" style="left:164.4px;top:293.6px;font-size:11px;letter-spacing:-0.04px;">Age : self.Age</span>
<div class="a" style="left:149.0px;top:311.3px;width:4.5px;height:3.0px;background:#d8d8d8;border-radius:1.2px;"></div>
<div class="a" style="left:149.0px;top:316.8px;width:4.5px;height:3.0px;background:#d8d8d8;border-radius:1.2px;opacity:.8;"></div>
<div class="a" style="left:154.0px;top:311.3px;width:9.0px;height:9.0px;background:#fff;border-radius:2px;"></div>
<span class="t" style="left:155.3px;top:311.9px;font-size:8px;color:#f5a028;font-weight:bold;">A</span>
<span class="t" style="left:164.4px;top:311.9px;font-size:11px;">CamelCaseMeansWePutInSpaces :</span>
<div class="a" style="left:149.0px;top:329.8px;width:4.5px;height:3.0px;background:#d8d8d8;border-radius:1.2px;"></div>
<div class="a" style="left:149.0px;top:335.3px;width:4.5px;height:3.0px;background:#d8d8d8;border-radius:1.2px;opacity:.8;"></div>
<div class="a" style="left:154.0px;top:329.8px;width:9.0px;height:9.0px;background:#fff;border-radius:2px;"></div>
<span class="t" style="left:155.3px;top:330.4px;font-size:8px;color:#f5a028;font-weight:bold;">A</span>
<span class="t" style="left:164.4px;top:330.4px;font-size:11px;letter-spacing:-0.05px;">NewColumn2 :</span>
<div class="a" style="left:149.0px;top:348.2px;width:4.5px;height:3.0px;background:#d8d8d8;border-radius:1.2px;"></div>
<div class="a" style="left:149.0px;top:353.7px;width:4.5px;height:3.0px;background:#d8d8d8;border-radius:1.2px;opacity:.8;"></div>
<div class="a" style="left:154.0px;top:348.2px;width:9.0px;height:9.0px;background:#fff;border-radius:2px;"></div>
<svg style="left:154.0px;top:347.7px" width="9" height="11"><circle cx="3.800" cy="4.300" r="2" fill="none" stroke="#f5a028" stroke-width="1" stroke-dasharray="1 .7"/><circle cx="6.200" cy="7.300" r="1.500" fill="none" stroke="#bbb" stroke-width=".9" stroke-dasharray="1 .6"/></svg>
<span class="t" style="left:164.4px;top:348.8px;font-size:11px;">DeleteMe : ACTION: DeleteThis</span>
<div class="a" style="left:149.0px;top:367.0px;width:4.5px;height:3.0px;background:#d8d8d8;border-radius:1.2px;"></div>
<div class="a" style="left:149.0px;top:372.5px;width:4.5px;height:3.0px;background:#d8d8d8;border-radius:1.2px;opacity:.8;"></div>
<div class="a" style="left:154.0px;top:367.0px;width:9.0px;height:9.0px;background:#fff;border-radius:2px;"></div>
<svg style="left:154.0px;top:366.5px" width="9" height="11"><circle cx="3.800" cy="4.300" r="2" fill="none" stroke="#f5a028" stroke-width="1" stroke-dasharray="1 .7"/><circle cx="6.200" cy="7.300" r="1.500" fill="none" stroke="#bbb" stroke-width=".9" stroke-dasharray="1 .6"/></svg>
<span class="t" style="left:164.4px;top:367.6px;font-size:11px;letter-spacing:0.04px;">AddACarIUsedToOwn : ACTION: AddACarIUsedToOwnAction</span>
<div class="a" style="left:149.0px;top:385.2px;width:4.5px;height:3.0px;background:#d8d8d8;border-radius:1.2px;"></div>
<div class="a" style="left:149.0px;top:390.7px;width:4.5px;height:3.0px;background:#d8d8d8;border-radius:1.2px;opacity:.8;"></div>
<div class="a" style="left:154.0px;top:385.2px;width:9.0px;height:9.0px;background:#fff;border-radius:2px;"></div>
<svg style="left:154.0px;top:384.7px" width="9" height="11"><path d="M2 8L7 3M4 3H7V6" fill="none" stroke="#f5a028" stroke-width="1.100"/></svg>
<span class="t" style="left:164.4px;top:385.8px;font-size:11px;">HistoricOwnership : self.HistoricOwnership</span>
<svg style="left:0.0px;top:0.0px" width="10" height="10"><path d="M474 392.500H488.500V629.500H452" fill="none" stroke="#000" stroke-width="1"/><path d="M445 629.500L453 624.800V634.200Z" fill="#000"/></svg>
<svg style="left:119.0px;top:394.0px" width="8" height="8"><path d="M7 0.500V6.500H1Z" fill="#3a3a3a"/></svg>
<div class="a" style="left:146.0px;top:405.7px;width:70.7px;height:22.5px;background:#fff5a0;"></div>
<span class="t" style="left:149.0px;top:411.3px;font-size:12px;font-weight:bold;letter-spacing:-0.86px;">Actions</span>
<svg style="left:190.9px;top:406.9px" width="20.6" height="20.6"><circle cx="10.3" cy="10.3" r="9.3" fill="#fff" stroke="#111" stroke-width="1"/><path d="M-3.200 1.600L0 -1.600L3.200 1.600" transform="translate(10.3 10.3)" fill="none" stroke="#111" stroke-width="1.800"/></svg>
<div class="a" style="left:146.0px;top:427.7px;width:326.0px;height:144.0px;background:#fff5a0;"></div>
<span class="t" style="left:146.5px;top:428.3px;font-size:12px;font-weight:bold;letter-spacing:-0.74px;">Actions leading here</span>
<div class="a" style="left:146.2px;top:441.0px;width:89.5px;height:12.5px;background:#e1e1e1;border:1px solid #6e6e6e;"></div>
<span class="t" style="left:148.2px;top:443.0px;font-size:9px;letter-spacing:-0.03px;">Class Action for show</span>
<div class="a" style="left:235.2px;top:441.0px;width:94.5px;height:12.5px;background:#e1e1e1;border:1px solid #6e6e6e;"></div>
<span class="t" style="left:237.4px;top:443.0px;font-size:9px;">Global Action for show</span>
<div class="a" style="left:329.2px;top:441.0px;width:95.5px;height:12.5px;background:#e1e1e1;border:1px solid #6e6e6e;"></div>
<span class="t" style="left:331.4px;top:443.0px;font-size:9px;letter-spacing:0.03px;">Global Action + Create</span>
<span class="t" style="left:146.2px;top:454.6px;font-size:11px;color:#0000f0;text-decoration:underline;">CL:Person /ShowPersonIAmInControl</span>
<div class="a" style="left:146.2px;top:477.4px;width:53.8px;height:13.2px;background:#e1e1e1;border:1px solid #6e6e6e;"></div>
<span class="t" style="left:148.3px;top:479.8px;font-size:9px;">Class Action</span>
<div class="a" style="left:199.5px;top:477.4px;width:76.0px;height:13.2px;background:#e1e1e1;border:1px solid #6e6e6e;"></div>
<span class="t" style="left:201.8px;top:479.8px;font-size:9px;letter-spacing:0.04px;">ViewModel Action</span>
<span class="t" style="left:152.0px;top:491.3px;font-size:12px;font-weight:bold;letter-spacing:-0.89px;">AutoForms</span>
<span class="t" style="left:155.0px;top:503.6px;font-size:11px;color:#0000f0;text-decoration:underline;letter-spacing:-0.04px;">ShowPerson</span>
<div class="a" style="left:217.0px;top:503.5px;width:14.0px;height:16.5px;background:#e1e1e1;border:1px solid #6e6e6e;"></div>
<svg style="left:220.0px;top:507.2px" width="9" height="9"><rect x=".5" y=".5" width="8" height="8" rx="1.500" fill="#fafafa" stroke="#ddd" stroke-width=".6"/><path d="M2.800 3.500H6.200V6H2.800Z" fill="none" stroke="#f5a028" stroke-width=".7" opacity=".8"/></svg>
<div class="a" style="left:230.5px;top:503.5px;width:39.3px;height:16.5px;background:#e1e1e1;border:1px solid #6e6e6e;"></div>
<span class="t" style="left:232.9px;top:505.9px;font-size:11px;letter-spacing:0.04px;">opt-out</span>
<span class="t" style="left:272.6px;top:503.9px;font-size:11px;letter-spacing:-0.02px;">(Person)</span>
<span class="t" style="left:155.0px;top:524.6px;font-size:11px;color:#0000f0;text-decoration:underline;letter-spacing:0.04px;">AddACarIUsedToOwnAction</span>
<div class="a" style="left:294.0px;top:524.2px;width:14.0px;height:18.5px;background:#e1e1e1;border:1px solid #6e6e6e;"></div>
<svg style="left:297.0px;top:529.5px" width="9" height="9"><rect x=".5" y=".5" width="8" height="8" rx="1.500" fill="#fafafa" stroke="#ddd" stroke-width=".6"/><path d="M2.800 3.500H6.200V6H2.800Z" fill="none" stroke="#f5a028" stroke-width=".7" opacity=".8"/></svg>
<svg style="left:335.2px;top:521.3px" width="20" height="20"><circle cx="10" cy="10" r="9" fill="#fff" stroke="#111" stroke-width="1"/><path d="M-3.200 -1.600L0 1.600L3.200 -1.600" transform="translate(10 10)" fill="none" stroke="#111" stroke-width="1.800"/></svg>
<span class="t" style="left:359.2px;top:525.9px;font-size:11px;letter-spacing:-0.09px;">1 optouts</span>
<span class="t" style="left:155.0px;top:543.6px;font-size:11px;color:#0000f0;text-decoration:underline;">DeleteThis</span>
<span class="t" style="left:155.0px;top:555.9px;font-size:11px;color:#0000f0;text-decoration:underline;letter-spacing:-0.04px;">ShowPerson</span>
<div class="a" style="left:217.0px;top:555.0px;width:38.8px;height:16.6px;background:#e1e1e1;border:1px solid #6e6e6e;"></div>
<span class="t" style="left:219.2px;top:557.4px;font-size:11px;letter-spacing:0.04px;">opt-out</span>
<span class="t" style="left:258.9px;top:556.1px;font-size:11px;letter-spacing:-0.02px;">(Person)</span>
<div class="a" style="left:146.0px;top:577.8px;width:159.0px;height:22.5px;background:#2ed0c0;"></div>
<span class="t" style="left:149.0px;top:583.3px;font-size:12px;font-weight:bold;letter-spacing:-0.60px;">Variables and Validations</span>
<svg style="left:279.9px;top:579.2px" width="20" height="20"><circle cx="10" cy="10" r="9" fill="#fff" stroke="#111" stroke-width="1"/><path d="M-3.200 -1.600L0 1.600L3.200 -1.600" transform="translate(10 10)" fill="none" stroke="#111" stroke-width="1.800"/></svg>
<div class="a" style="left:157.0px;top:614.6px;width:283.0px;height:167.0px;background:#add8e6;border-radius:2px;"></div>
<span class="t" style="left:162.3px;top:620.5px;font-size:16px;">HistoricOwnership : HistoricOwnership</span>
<div class="a" style="left:162.3px;top:638.4px;width:98.5px;height:13.0px;background:#e1e1e1;border:1px solid #6e6e6e;"></div>
<span class="t" style="left:164.3px;top:640.4px;font-size:9.5px;letter-spacing:-0.28px;">Add column from model</span>
<div class="a" style="left:168.0px;top:657.2px;width:4.5px;height:3.0px;background:#ffff3c;border-radius:1.2px;"></div>
<div class="a" style="left:168.0px;top:662.7px;width:4.5px;height:3.0px;background:#d8d8d8;border-radius:1.2px;opacity:.8;"></div>
<div class="a" style="left:173.0px;top:657.2px;width:9.0px;height:9.0px;background:#fff;border-radius:2px;"></div>
<span class="t" style="left:174.3px;top:657.8px;font-size:8px;color:#f5a028;font-weight:bold;">A</span>
<span class="t" style="left:183.4px;top:657.8px;font-size:11px;">DateSold : self.DateSold</span>
<div class="a" style="left:168.0px;top:676.0px;width:4.5px;height:3.0px;background:#ffff3c;border-radius:1.2px;"></div>
<div class="a" style="left:168.0px;top:681.5px;width:4.5px;height:3.0px;background:#d8d8d8;border-radius:1.2px;opacity:.8;"></div>
<div class="a" style="left:173.0px;top:676.0px;width:9.0px;height:9.0px;background:#fff;border-radius:2px;"></div>
<span class="t" style="left:174.3px;top:676.6px;font-size:8px;color:#f5a028;font-weight:bold;">A</span>
<span class="t" style="left:183.4px;top:676.6px;font-size:11px;">Name : self.Person.Name</span>
<div class="a" style="left:168.0px;top:694.2px;width:4.5px;height:3.0px;background:#ffff3c;border-radius:1.2px;"></div>
<div class="a" style="left:168.0px;top:699.7px;width:4.5px;height:3.0px;background:#d8d8d8;border-radius:1.2px;opacity:.8;"></div>
<div class="a" style="left:173.0px;top:694.2px;width:9.0px;height:9.0px;background:#fff;border-radius:2px;"></div>
<span class="t" style="left:174.3px;top:694.8px;font-size:8px;color:#f5a028;font-weight:bold;">A</span>
<span class="t" style="left:183.4px;top:694.8px;font-size:11px;">RegistrationNumber : self.Car.AsString</span>
<div class="a" style="left:165.0px;top:714.0px;width:267.0px;height:59.5px;background:#fff5a0;"></div>
<div class="a" style="left:165.2px;top:714.4px;width:53.8px;height:13.0px;background:#e1e1e1;border:1px solid #6e6e6e;"></div>
<span class="t" style="left:167.3px;top:716.7px;font-size:9px;">Class Action</span>
<div class="a" style="left:218.5px;top:714.4px;width:76.2px;height:13.0px;background:#e1e1e1;border:1px solid #6e6e6e;"></div>
<span class="t" style="left:220.8px;top:716.7px;font-size:9px;letter-spacing:0.04px;">ViewModel Action</span>
<span class="t" style="left:171.0px;top:729.1px;font-size:12px;font-weight:bold;letter-spacing:-0.89px;">AutoForms</span>
<span class="t" style="left:174.0px;top:741.6px;font-size:11px;color:#0000f0;text-decoration:underline;letter-spacing:0.02px;">ShowCar</span>
<div class="a" style="left:219.4px;top:741.3px;width:14.0px;height:15.5px;background:#e1e1e1;border:1px solid #6e6e6e;"></div>
<svg style="left:222.4px;top:745.0px" width="9" height="9"><rect x=".5" y=".5" width="8" height="8" rx="1.500" fill="#fafafa" stroke="#ddd" stroke-width=".6"/><path d="M2.800 3.500H6.200V6H2.800Z" fill="none" stroke="#f5a028" stroke-width=".7" opacity=".8"/></svg>
<div class="a" style="left:233.0px;top:741.3px;width:37.8px;height:15.5px;background:#e1e1e1;border:1px solid #6e6e6e;"></div>
<span class="t" style="left:234.7px;top:743.2px;font-size:11px;letter-spacing:0.04px;">opt-out</span>
<span class="t" style="left:274.7px;top:741.9px;font-size:11px;">(Car)</span>
<span class="t" style="left:174.0px;top:758.4px;font-size:11px;color:#0000f0;text-decoration:underline;letter-spacing:0.02px;">ShowCar</span>
<div class="a" style="left:219.4px;top:757.4px;width:37.3px;height:16.2px;background:#e1e1e1;border:1px solid #6e6e6e;"></div>
<span class="t" style="left:220.8px;top:759.6px;font-size:11px;letter-spacing:0.04px;">opt-out</span>
<span class="t" style="left:260.6px;top:758.6px;font-size:11px;">(Car)</span>
<div class="a" style="left:142.8px;top:705.6px;width:322.0px;height:82.1px;border:4px solid #07aeee;border-radius:7.5px;box-shadow:1.500px 2px 3.500px rgba(0,0,0,.38),inset 1.500px 2px 3.500px rgba(0,0,0,.38);"></div>
<svg style="left:0.0px;top:0.0px" width="10" height="10"><defs><filter id="sh" x="-20%" y="-20%" width="140%" height="140%"><feDropShadow dx="-1" dy="1.500" stdDeviation="1.500" flood-color="#000" flood-opacity=".4"/></filter></defs><path d="M450.500 791.900L475.800 805.700L470.600 807.500L523 886.400L520.900 887.600L460.200 815.100L457.400 820Z" fill="#07aeee" filter="url(#sh)"/></svg>
<!-- ViewModel editor right part -->
<div class="a" style="left:1323.4px;top:164.0px;width:36.8px;height:20.0px;background:#90ee90;"></div>
<span class="t" style="left:1325.8px;top:165.9px;font-size:12px;letter-spacing:-0.45px;">UIFirst</span>
<span class="t" style="left:659.3px;top:190.9px;font-size:11px;">Use placing hints:</span>
<div class="a" style="left:770.3px;top:189.8px;width:13.5px;height:13.5px;background:#fff;border:1px solid #444;"></div>
<svg style="left:770.3px;top:189.8px" width="13" height="13"><path d="M3 6.500L5.600 9.600L10.500 3.400" fill="none" stroke="#111" stroke-width="1.900"/></svg>
<span class="t" style="left:659.3px;top:206.6px;font-size:11px;letter-spacing:-0.08px;">CodeGen :</span>
<div class="a" style="left:770.3px;top:205.8px;width:13.5px;height:13.5px;background:#fff;border:1px solid #444;"></div>
<div class="a" style="left:1281.5px;top:189.8px;width:13.5px;height:13.5px;background:#fff;border:1px solid #444;"></div>
<svg style="left:1281.5px;top:189.8px" width="13" height="13"><path d="M3 6.500L5.600 9.600L10.500 3.400" fill="none" stroke="#111" stroke-width="1.900"/></svg>
<span class="t" style="left:1300.5px;top:188.9px;font-size:11px;letter-spacing:-0.09px;">Label on top</span>
<div class="a" style="left:1179.4px;top:204.5px;width:75.8px;height:16.0px;background:#e1e1e1;border:1px solid #6e6e6e;"></div>
<span class="t" style="left:1181.6px;top:206.6px;font-size:11px;letter-spacing:0.04px;">Tagged values</span>
<div class="a" style="left:1254.8px;top:204.5px;width:105.3px;height:16.0px;background:#e1e1e1;border:1px solid #6e6e6e;"></div>
<span class="t" style="left:1257.0px;top:206.6px;font-size:11px;">Analyze expressions</span>
<div class="a" style="left:654.7px;top:226.5px;width:710.3px;height:15.7px;background:#add8e6;border:1px solid #9ccbdb;"></div>
<span class="t" style="left:657.0px;top:227.4px;font-size:14px;">A Nesting level of the ViewModel</span>
<svg style="left:654.8px;top:244.9px" width="20.6" height="20.6"><circle cx="10.3" cy="10.3" r="9.3" fill="#fff" stroke="#111" stroke-width="1"/><path d="M-3.200 1.600L0 -1.600L3.200 1.600" transform="translate(10.3 10.3)" fill="none" stroke="#111" stroke-width="1.800"/></svg>
<span class="t" style="left:679.4px;top:249.8px;font-size:11px;letter-spacing:-0.06px;">Properties</span>
<span class="t" style="left:660.0px;top:272.6px;font-size:11px;letter-spacing:-0.18px;">Name:</span>
<div class="a" style="left:770.3px;top:270.2px;width:588.6px;height:14.5px;background:#fff;border:1px solid #abadb3;"></div>
<span class="t" style="left:773.5px;top:272.6px;font-size:11px;">HistoricOwnership</span>
<span class="t" style="left:660.0px;top:288.9px;font-size:11px;">Class:</span>
<div class="a" style="left:770.3px;top:285.7px;width:568.1px;height:16.8px;background:linear-gradient(#ececec,#e2e2e2);border:1px solid #b4b4b4;"></div>
<span class="t" style="left:776.0px;top:288.9px;font-size:11px;">HistoricOwnership</span>
<svg style="left:1325.0px;top:291.0px" width="8" height="6"><path d="M1 1L4 4L7 1" fill="none" stroke="#444" stroke-width="1.100"/></svg>
<div class="a" style="left:1338.4px;top:285.7px;width:20.5px;height:16.8px;background:#e1e1e1;border:1px solid #6e6e6e;"></div>
<span class="t" style="left:1344.7px;top:288.2px;font-size:11px;letter-spacing:-0.39px;">...</span>
<div class="a" style="left:771.5px;top:304.2px;width:13.5px;height:13.5px;background:#fff;border:1px solid #444;"></div>
<span class="t" style="left:790.0px;top:302.8px;font-size:11px;letter-spacing:-0.03px;">Always show actions</span>
<div class="a" style="left:902.2px;top:304.2px;width:13.5px;height:13.5px;background:#fff;border:1px solid #444;"></div>
<span class="t" style="left:921.1px;top:302.8px;font-size:11px;">Navigate On RowSelect Enable</span>
<span class="t" style="left:660.0px;top:319.9px;font-size:11px;">Act As For Actions:</span>
<div class="a" style="left:770.3px;top:318.5px;width:568.1px;height:15.7px;background:#fff;border:1px solid #abadb3;"></div>
<span class="t" style="left:772.5px;top:320.6px;font-size:11px;letter-spacing:0.07px;">self.Car</span>
<div class="a" style="left:1338.4px;top:318.5px;width:20.5px;height:15.7px;background:#e1e1e1;border:1px solid #6e6e6e;"></div>
<span class="t" style="left:1344.7px;top:320.5px;font-size:11px;letter-spacing:-0.39px;">...</span>
<div class="a" style="left:660.1px;top:335.4px;width:109.6px;height:15.3px;background:#e1e1e1;border:1px solid #6e6e6e;"></div>
<span class="t" style="left:673.6px;top:338.0px;font-size:11px;letter-spacing:0.04px;">Winform preview</span>
<div class="a" style="left:1328.2px;top:357.5px;width:34.6px;height:349.2px;background:#e1e1e1;"></div>
<div class="a" style="left:1328.2px;top:391.8px;width:34.6px;height:1.0px;background:#cfcfcf;"></div>
<div class="a" style="left:1328.2px;top:427.0px;width:34.6px;height:1.0px;background:#cfcfcf;"></div>
<div class="a" style="left:1328.2px;top:462.1px;width:34.6px;height:1.0px;background:#cfcfcf;"></div>
<div class="a" style="left:1328.2px;top:496.8px;width:34.6px;height:1.0px;background:#cfcfcf;"></div>
<div class="a" style="left:1328.2px;top:531.8px;width:34.6px;height:1.0px;background:#cfcfcf;"></div>
<div class="a" style="left:1328.2px;top:566.8px;width:34.6px;height:1.0px;background:#cfcfcf;"></div>
<div class="a" style="left:1328.2px;top:601.9px;width:34.6px;height:1.0px;background:#cfcfcf;"></div>
<div class="a" style="left:1328.2px;top:636.8px;width:34.6px;height:1.0px;background:#cfcfcf;"></div>
<div class="a" style="left:1328.2px;top:671.8px;width:34.6px;height:1.0px;background:#cfcfcf;"></div>
<div class="a" style="left:1328.2px;top:392.8px;width:34.6px;height:1.0px;background:#e6e6e6;"></div>
<div class="a" style="left:1328.2px;top:428.0px;width:34.6px;height:1.0px;background:#e6e6e6;"></div>
<div class="a" style="left:1328.2px;top:463.1px;width:34.6px;height:1.0px;background:#e6e6e6;"></div>
<div class="a" style="left:1328.2px;top:497.8px;width:34.6px;height:1.0px;background:#e6e6e6;"></div>
<div class="a" style="left:1328.2px;top:532.8px;width:34.6px;height:1.0px;background:#e6e6e6;"></div>
<div class="a" style="left:1328.2px;top:567.8px;width:34.6px;height:1.0px;background:#e6e6e6;"></div>
<div class="a" style="left:1328.2px;top:602.9px;width:34.6px;height:1.0px;background:#e6e6e6;"></div>
<div class="a" style="left:1328.2px;top:637.8px;width:34.6px;height:1.0px;background:#e6e6e6;"></div>
<div class="a" style="left:1328.2px;top:672.8px;width:34.6px;height:1.0px;background:#e6e6e6;"></div>
<svg style="left:1328.0px;top:357.5px" width="35" height="35"><rect x="9.800" y="12.800" width="14.600" height="11.600" fill="none" stroke="#111" stroke-width="1.800"/><path d="M24.300 9.800L13.300 20.200" stroke="#e1e1e1" stroke-width="6.600" stroke-linecap="round"/><path d="M23.800 10.300L15 18.600" stroke="#111" stroke-width="3.800" stroke-linecap="round"/><path d="M11.700 21.800L12.800 17.600L16 20.800Z" fill="#111"/></svg>
<svg style="left:1328.0px;top:392.3px" width="35" height="35"><text x="17" y="26.500" font-family="'Liberation Serif',serif" font-weight="bold" font-size="25.500" text-anchor="middle" fill="#111">T</text></svg>
<svg style="left:1328.0px;top:427.5px" width="35" height="35"><rect x="12" y="13.800" width="9" height="8.500" fill="none" stroke="#111" stroke-width="1.800"/><path d="M13.600 16.600L16.600 20.400L23.500 13.200" fill="none" stroke="#111" stroke-width="2.300"/></svg>
<svg style="left:1328.0px;top:462.6px" width="35" height="35"><rect x="7.200" y="12.600" width="12.200" height="9.400" fill="none" stroke="#111" stroke-width="1.700"/><path d="M7 12.800H20" stroke="#111" stroke-width="2.100"/><path d="M7 17H20" stroke="#111" stroke-width="1.600"/><path d="M24.600 12.200V21M21.400 17.800L24.600 22L27.800 17.800" fill="none" stroke="#111" stroke-width="2.100"/></svg>
<svg style="left:1328.0px;top:497.3px" width="35" height="35"><rect x="8.100" y="11.300" width="17.900" height="14.400" rx="1" fill="#111"/><path d="M12.300 9V13M21.800 9V13" stroke="#111" stroke-width="2.600" stroke-linecap="round"/><rect x="10.2" y="15.3" width="2.500" height="2" fill="#e8e8e8"/><rect x="13.9" y="15.3" width="2.500" height="2" fill="#e8e8e8"/><rect x="17.6" y="15.3" width="2.500" height="2" fill="#e8e8e8"/><rect x="21.3" y="15.3" width="2.500" height="2" fill="#e8e8e8"/><rect x="10.2" y="18.4" width="2.500" height="2" fill="#e8e8e8"/><rect x="13.9" y="18.4" width="2.500" height="2" fill="#e8e8e8"/><rect x="17.6" y="18.4" width="2.500" height="2" fill="#e8e8e8"/><rect x="21.3" y="18.4" width="2.500" height="2" fill="#e8e8e8"/><rect x="10.2" y="21.5" width="2.500" height="2" fill="#e8e8e8"/><rect x="13.9" y="21.5" width="2.500" height="2" fill="#e8e8e8"/><rect x="17.6" y="21.5" width="2.500" height="2" fill="#e8e8e8"/><rect x="21.3" y="21.5" width="2.500" height="2" fill="#e8e8e8"/></svg>
<svg style="left:1328.0px;top:532.3px" width="35" height="35"><rect x="8.900" y="10.600" width="16.200" height="13.600" fill="none" stroke="#111" stroke-width="1.800"/><path d="M13.800 13L15.400 14.800L17 12.800L18.600 14.800L20.200 13V16.500C20.200 18.300 18.800 19.400 17 19.400C15.200 19.400 13.800 18.300 13.800 16.500Z" fill="#111"/><path d="M17 19V23" stroke="#111" stroke-width="1.400"/><path d="M12.300 18.500C12.300 21 14 22.800 16.600 23C16.600 20.500 15 18.700 12.300 18.500ZM21.700 18.500C21.700 21 20 22.800 17.400 23C17.400 20.500 19 18.700 21.700 18.500Z" fill="#111"/></svg>
<svg style="left:1328.0px;top:567.3px" width="35" height="35"><rect x="8.200" y="13" width="17.600" height="8.700" rx="2.800" fill="none" stroke="#111" stroke-width="2"/><text x="17" y="19.800" font-size="6.800" font-weight="bold" text-anchor="middle" font-family="'Liberation Sans',sans-serif" fill="#111">btn</text></svg>
<svg style="left:1328.0px;top:602.4px" width="35" height="35"><rect x="8.700" y="9" width="16.600" height="15.300" fill="none" stroke="#111" stroke-width="1.500"/><rect x="9.500" y="9.800" width="15" height="7" fill="#eee"/><text x="10.300" y="15.800" font-size="7" font-weight="bold" font-family="'Liberation Sans',sans-serif" fill="#111">list</text><path d="M9 18.300H25M9 20.600H25M9 22.700H25" stroke="#111" stroke-width="1.200"/></svg>
<svg style="left:1328.0px;top:637.3px" width="35" height="35"><path d="M17 9.600L23.300 13L17 16.400L10.700 13Z" fill="#111"/><path d="M10.700 13.800L16.600 17V24.300L10.700 21Z" fill="#555"/><path d="M23.300 13.800L17.400 17V24.300L23.300 21Z" fill="#8a8a8a"/><path d="M10.500 10.500C8 11 8 13 8 15V19C8 21.500 8 23 10.500 23.800M23.500 10.500C26 11 26 13 26 15V19C26 21.500 26 23 23.500 23.800" fill="none" stroke="#111" stroke-width="1.200"/></svg>
<svg style="left:1328.0px;top:672.3px" width="35" height="35"><path d="M11 26H9C8 26 7.700 25.500 7.700 24.500V9.200C7.700 8.300 8.200 7.900 9 7.900H27.500C28.500 7.900 28.900 8.400 28.900 9.200V24.500C28.900 25.500 28.500 26 27.500 26H25.500" fill="none" stroke="#555" stroke-width="1.100"/><path d="M7.700 11.300H28.900" stroke="#555" stroke-width="1"/><path d="M10 9.600H15" stroke="#555" stroke-width="1.200"/><path d="M20 9.600H26.500" stroke="#555" stroke-width="1" stroke-dasharray="1 1.300"/><rect x="11.500" y="15.600" width="13.400" height="13.200" rx="1.800" fill="#e1e1e1" stroke="#111" stroke-width="1.300"/><path d="M13.500 19.500V18.500C13.500 18 13.800 17.600 14.500 17.600H15.500M21 17.600H22C22.600 17.600 23 18 23 18.500V19.500M23 24.800V25.800C23 26.400 22.600 26.800 22 26.800H21M15.500 26.800H14.500C13.800 26.800 13.500 26.400 13.500 25.800V24.800" fill="none" stroke="#111" stroke-width="1"/><path d="M14 22.200C16 19.500 20.500 19.500 22.500 22.200C20.500 24.900 16 24.900 14 22.200Z" fill="none" stroke="#111" stroke-width="1"/><circle cx="18.200" cy="22.200" r="1.500" fill="none" stroke="#111" stroke-width="1"/></svg>
<div class="a" style="left:665.9px;top:473.5px;width:647.0px;height:349.5px;background:#e7e7e7;"></div>
<div class="a" style="left:1299.6px;top:809.6px;width:1.0px;height:13.4px;background:#eeeeee;"></div>
<div class="a" style="left:1236.2px;top:809.6px;width:1.0px;height:13.4px;background:#eeeeee;"></div>
<div class="a" style="left:1172.8px;top:809.6px;width:1.0px;height:13.4px;background:#eeeeee;"></div>
<div class="a" style="left:1109.4px;top:809.6px;width:1.0px;height:13.4px;background:#eeeeee;"></div>
<div class="a" style="left:1046.0px;top:809.6px;width:1.0px;height:13.4px;background:#eeeeee;"></div>
<div class="a" style="left:982.6px;top:809.6px;width:1.0px;height:13.4px;background:#eeeeee;"></div>
<div class="a" style="left:919.2px;top:809.6px;width:1.0px;height:13.4px;background:#eeeeee;"></div>
<div class="a" style="left:855.8px;top:809.6px;width:1.0px;height:13.4px;background:#eeeeee;"></div>
<div class="a" style="left:792.4px;top:809.6px;width:1.0px;height:13.4px;background:#eeeeee;"></div>
<div class="a" style="left:729.0px;top:809.6px;width:1.0px;height:13.4px;background:#eeeeee;"></div>
<div class="a" style="left:1300.0px;top:512.3px;width:13.0px;height:1.0px;background:#eeeeee;"></div>
<div class="a" style="left:1300.0px;top:556.6px;width:13.0px;height:1.0px;background:#eeeeee;"></div>
<div class="a" style="left:1300.0px;top:595.7px;width:13.0px;height:1.0px;background:#eeeeee;"></div>
<div class="a" style="left:1300.0px;top:634.4px;width:13.0px;height:1.0px;background:#eeeeee;"></div>
<div class="a" style="left:1300.0px;top:678.4px;width:13.0px;height:1.0px;background:#eeeeee;"></div>
<div class="a" style="left:1300.0px;top:712.1px;width:13.0px;height:1.0px;background:#eeeeee;"></div>
<div class="a" style="left:1300.0px;top:744.6px;width:13.0px;height:1.0px;background:#eeeeee;"></div>
<div class="a" style="left:1300.0px;top:777.0px;width:13.0px;height:1.0px;background:#eeeeee;"></div>
<div class="a" style="left:1300.0px;top:809.6px;width:13.0px;height:1.0px;background:#eeeeee;"></div>
<div class="a" style="left:665.9px;top:473.5px;width:634.1px;height:336.1px;background:#d3d3d3;"></div>
<div class="a" style="left:666.3px;top:478.0px;width:313.4px;height:32.6px;background:#fff;border:1px solid #b8b8b8;border-bottom:1px solid #6f6f6f;box-shadow:0 1px 0 rgba(0,0,0,.16),0 2px 1px rgba(0,0,0,.06);"></div>
<span class="t" style="left:672.3px;top:481.9px;font-size:12.7px;color:#a2a2a2;">Name</span>
<div class="a" style="left:666.3px;top:517.0px;width:249.6px;height:38.9px;background:#fff;border:1px solid #b8b8b8;border-bottom:1px solid #6f6f6f;box-shadow:0 1px 0 rgba(0,0,0,.16),0 2px 1px rgba(0,0,0,.06);"></div>
<span class="t" style="left:672.3px;top:520.9px;font-size:12.7px;color:#a2a2a2;">Age (Years)</span>
<div class="a" style="left:666.3px;top:561.4px;width:249.6px;height:32.3px;background:#fff;border:1px solid #b8b8b8;border-bottom:1px solid #6f6f6f;box-shadow:0 1px 0 rgba(0,0,0,.16),0 2px 1px rgba(0,0,0,.06);"></div>
<span class="t" style="left:672.3px;top:565.3px;font-size:12.7px;color:#a2a2a2;">I am in control</span>
<div class="a" style="left:666.3px;top:600.1px;width:249.6px;height:32.5px;background:#fff;border:1px solid #b8b8b8;border-bottom:1px solid #6f6f6f;box-shadow:0 1px 0 rgba(0,0,0,.16),0 2px 1px rgba(0,0,0,.06);"></div>
<span class="t" style="left:672.3px;top:604.0px;font-size:12.7px;color:#a2a2a2;">New Column2</span>
<div class="a" style="left:923.4px;top:516.5px;width:183.3px;height:39.8px;background:#3667ac;border-radius:3px;box-shadow:0 1px 3px rgba(0,0,0,.45);"></div>
<span class="t" style="left:975.8px;top:528.7px;font-size:17px;color:#fff;text-shadow:0 0 .6px #fff;letter-spacing:0.28px;">Delete Me</span>
<div class="a" style="left:669.4px;top:637.5px;width:246.7px;height:39.8px;background:#3667ac;border-radius:3px;box-shadow:0 1px 3px rgba(0,0,0,.45);"></div>
<span class="t" style="left:691.5px;top:650.7px;font-size:17px;color:#fff;text-shadow:0 0 .6px #fff;letter-spacing:0.46px;">Add A Car I Used To Own</span>
<span class="t" style="left:678.7px;top:684.4px;font-size:20px;letter-spacing:0.07px;">Historic Ownership</span>
<div class="a" style="left:666.3px;top:709.8px;width:440.4px;height:99.8px;background:#fff;border:1px solid #a8a8a8;border-radius:4px;"></div>
<div class="a" style="left:667.0px;top:740.5px;width:439.0px;height:1.0px;background:#b5b5b5;"></div>
<div class="a" style="left:667.0px;top:741.5px;width:170.0px;height:0.8px;background:#d8d8d8;"></div>
<span class="t" style="left:672.5px;top:711.9px;font-size:13px;color:#878787;letter-spacing:0.33px;">Date</span>
<span class="t" style="left:672.5px;top:728.0px;font-size:13px;color:#878787;letter-spacing:0.24px;">Sold</span>
<span class="t" style="left:729.5px;top:719.2px;font-size:13px;color:#878787;width:32.400px;overflow:hidden;padding-bottom:3px;">Name</span>
<span class="t" style="left:786.4px;top:711.9px;font-size:13px;color:#878787;width:32.400px;overflow:hidden;padding-bottom:3px;">Registration</span>
<span class="t" style="left:786.4px;top:728.0px;font-size:13px;color:#878787;width:32.400px;overflow:hidden;padding-bottom:3px;">Number</span>
<svg style="left:702.8px;top:720.2px" width="11" height="10.5"><path d="M0 0H11L6.800 4.800V10.500H4.200V4.800Z" fill="#f0f0f0"/></svg>
<svg style="left:762.4px;top:720.2px" width="11" height="10.5"><path d="M0 0H11L6.800 4.800V10.500H4.200V4.800Z" fill="#f0f0f0"/></svg>
<svg style="left:819.9px;top:720.2px" width="11" height="10.5"><path d="M0 0H11L6.800 4.800V10.500H4.200V4.800Z" fill="#f0f0f0"/></svg>
<div class="a" style="left:1075.3px;top:717.0px;width:6.2px;height:6.2px;background:#3667ac;border-radius:3.1px;"></div>
<div class="a" style="left:1084.7px;top:717.0px;width:6.2px;height:6.2px;background:#3667ac;border-radius:3.1px;"></div>
<div class="a" style="left:1094.1px;top:717.0px;width:6.2px;height:6.2px;background:#3667ac;border-radius:3.1px;"></div>
<div class="a" style="left:655.9px;top:944.2px;width:13.0px;height:13.0px;background:#fff;border:1px solid #444;"></div>
<span class="t" style="left:674.0px;top:942.6px;font-size:11px;letter-spacing:-0.04px;">Show grid lines</span>
<div class="a" style="left:752.8px;top:944.2px;width:13.0px;height:13.0px;background:#fff;border:1px solid #444;"></div>
<span class="t" style="left:771.0px;top:942.6px;font-size:11px;">Show tab-order</span>
<div class="a" style="left:849.0px;top:939.0px;width:17.7px;height:22.5px;background:#e1e1e1;border:1px solid #6e6e6e;"></div>
<span class="t" style="left:851.6px;top:944.4px;font-size:11px;letter-spacing:0.09px;">Fit</span>
<span class="t" style="left:654.5px;top:967.5px;font-size:7.5px;letter-spacing:0.19px;">Screen size marker</span>
<div class="a" style="left:723.4px;top:965.8px;width:18.8px;height:11.0px;background:#fff;border:1px solid #abadb3;"></div>
<span class="t" style="left:727.0px;top:967.5px;font-size:7.5px;letter-spacing:-0.17px;">758</span>
<span class="t" style="left:742.5px;top:967.5px;font-size:7.5px;">X</span>
<div class="a" style="left:747.5px;top:965.8px;width:19.5px;height:11.0px;background:#fff;border:1px solid #abadb3;"></div>
<span class="t" style="left:751.5px;top:967.5px;font-size:7.5px;letter-spacing:-0.17px;">600</span>
<span class="t" style="left:767.5px;top:967.5px;font-size:7.5px;letter-spacing:0.23px;">SuggestedZoom</span>
<div class="a" style="left:825.8px;top:965.8px;width:28.7px;height:11.0px;background:#fff;border:1px solid #abadb3;"></div>
<div class="a" style="left:854.5px;top:962.5px;width:79.5px;height:17.0px;background:#e1e1e1;border:1px solid #6e6e6e;"></div>
<span class="t" style="left:857.0px;top:967.5px;font-size:7.5px;letter-spacing:0.20px;">Set shrink zoom to fit</span>
<div class="a" style="left:944.0px;top:962.5px;width:149.3px;height:17.0px;background:#e1e1e1;border:1px solid #6e6e6e;"></div>
<span class="t" style="left:946.1px;top:965.1px;font-size:11px;">WebApp Prototype Edit-Mode</span>
</body>
</html>
